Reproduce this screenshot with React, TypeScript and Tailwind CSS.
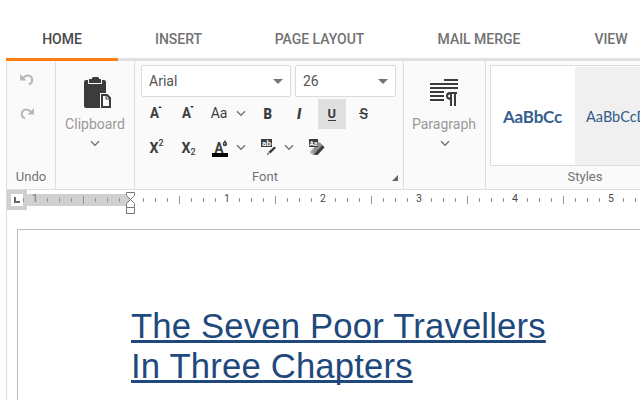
import React from "react";

const tabs = [
  { label: "HOME", width: "w-[112px]" },
  { label: "INSERT", width: "w-[121px]" },
  { label: "PAGE LAYOUT", width: "w-[161px]" },
  { label: "MAIL MERGE", width: "w-[158px]" },
  { label: "VIEW", width: "w-[106px]" },
];

function Chevron() {
  return (
    <svg width="10" height="7" viewBox="0 0 10 7" fill="none" className="shrink-0">
      <path d="M1 1.2 5 5.2 9 1.2" stroke="#757575" strokeWidth="1.4" />
    </svg>
  );
}

function Tool({ children, active = false, label }: { children: React.ReactNode; active?: boolean; label: string }) {
  return (
    <button aria-label={label} className={"flex h-[30px] w-7 shrink-0 items-center justify-center " + (active ? "bg-[#e0e0e0]" : "")}>
      {children}
    </button>
  );
}

function DropTool({ children, label }: { children: React.ReactNode; label: string }) {
  return (
    <div className="flex w-11 shrink-0 items-center">
      <Tool label={label}>{children}</Tool>
      <span className="ml-[2px] flex pb-[2px]">
        <Chevron />
      </span>
    </div>
  );
}

function Glyph({ children }: { children: React.ReactNode }) {
  return (
    <svg width="16" height="16" viewBox="0.5 0.5 16 16" fill="#3c3c3c" className="shrink-0 overflow-visible">
      {children}
    </svg>
  );
}

function Combo({ value, width }: { value: string; width: string }) {
  return (
    <div className={"flex h-8 items-center justify-between rounded-[2px] border border-[#dbdbdb] bg-white pr-[7px] pl-[7px] text-[14px] text-[#525252] " + width}>
      <span>{value}</span>
      <svg width="10" height="5" viewBox="0 0 10 5">
        <path d="M0 0H10L5 5Z" fill="#757575" />
      </svg>
    </div>
  );
}

function Undo({ flip = false }: { flip?: boolean }) {
  return (
    <svg width="14" height="12" viewBox="0 0 14 12" fill="none" className={flip ? "-scale-x-100" : ""}>
      <path d="M3 3.8C7-.2 12.2 1.3 12.2 6c0 2.200-.8 3.700-3.200 4.500" stroke="#b8b8b8" strokeWidth="2" />
      <path d="M0 0V6.500H6.500Z" fill="#b8b8b8" />
    </svg>
  );
}

function ClipboardIcon() {
  return (
    <svg width="28" height="32" viewBox="0 0 28 32" fill="#3c3c3c">
      <path d="M2 3H4V7H18V3H20Q22 3 22 5V16H16V31H2Q0 31 0 29V5Q0 3 2 3Z" />
      <path d="M5 2H8V1Q8 0 10 0H13Q15 0 15 1V2H17V6H5Z" />
      <path d="M18 18H23L26 21V30H18Z" fill="#fafafa" stroke="#3c3c3c" strokeWidth="2" />
      <path d="M22 18V22H26" fill="none" stroke="#3c3c3c" strokeWidth="1" />
    </svg>
  );
}

function ParagraphIcon() {
  return (
    <svg width="28" height="28" viewBox="0 0 28 28" fill="#3c3c3c">
      <path d="M14 0H28V2H14ZM0 4H28V6H0ZM0 8H28V10H0ZM0 12H14V14H0ZM0 16H14V18H0ZM0 20H14V22H0Z" />
      <path d="M20 13H27V15H26V27H24V15H22V27H20V21Q16 20.500 16 17Q16 13 20 13Z" />
      <path d="M20 15.500V18.500Q18 18.500 18 17T20 15.500Z" fill="#fafafa" />
    </svg>
  );
}

function Ruler() {
  const ticks: React.ReactNode[] = [];
  for (let i = -9; i <= 42; i++) {
    if (i === 0) continue;
    const x = 124 + i * 12;
    if (i % 8 === 0) {
      ticks.push(
        <text key={i} x={x} y="12" textAnchor="middle" fontSize="10.5" fill={i < 0 ? "#777777" : "#484848"}>
          {Math.abs(i) / 8}
        </text>
      );
    } else if (i % 4 === 0) {
      ticks.push(<rect key={i} x={x} y="6" width="1" height="8" fill="#929292" />);
    } else {
      ticks.push(<rect key={i} x={x} y="8" width="1" height="4" fill="#929292" />);
    }
  }
  return (
    <svg width="633" height="39" viewBox="0 0 633 39" className="block shrink-0" fontFamily="Roboto, sans-serif">
      <rect x="0" y="4" width="123" height="12" fill="#d0d0d0" />
      <rect x="0" y="0" width="20" height="20" fill="#d0d0d0" />
      <rect x="4" y="4" width="12" height="12" fill="white" />
      <path d="M7 7H9V11H13V13H7Z" fill="#666666" />
      {ticks}
      <path d="M119.500 2.500H127.500V5.500L123.500 9.500L119.500 5.500ZM119.500 17.500V13.500L123.500 9.500L127.500 13.500V17.500ZM119.500 17.500H127.500V23.500H119.500Z" fill="white" stroke="#777777" />
    </svg>
  );
}

export default function App() {
  return (
    <div className="h-[400px] w-[640px] overflow-hidden bg-white pl-1.5 font-['Roboto',sans-serif] text-[#727272]">
      <nav className="flex h-[61px] w-[658px] pt-5">
        {tabs.map((tab, i) => (
          <button
            key={tab.label}
            className={
              "flex h-[41px] shrink-0 justify-center border-b-[3px] pt-[9px] text-[14px] leading-5 font-medium tracking-[-0.02px] " +
              tab.width +
              (i === 0 ? " border-[#ff7c11] text-[#484848]" : " border-[#e0e0e0] text-[#727272]")
            }
          >
            {tab.label}
          </button>
        ))}
      </nav>

      <div className="h-[339px] border-l border-[#dddddd]">
        <section className="flex h-[129px] w-[660px] border-b border-[#dddddd] bg-[#fafafa]">
          <div className="flex w-[49px] shrink-0 flex-col items-center border-r border-[#dddddd]">
            <div className="flex h-[106px] flex-col gap-[22px] pt-[13px] pr-[9px]">
              <Undo />
              <Undo flip />
            </div>
            <span className="text-[13px] leading-5">Undo</span>
          </div>

          <div className="flex w-[79px] shrink-0 flex-col items-center border-r border-[#dddddd] pt-4">
            <div className="pl-[6px]">
              <ClipboardIcon />
            </div>
            <span className="mt-[5px] text-[14px] leading-5 text-[#999999]">Clipboard</span>
            <div className="mt-[6px]">
              <Chevron />
            </div>
          </div>

          <div className="flex w-[269px] shrink-0 flex-col border-r border-[#dddddd] pt-1">
            <div className="flex gap-1 pl-1.5">
              <Combo value="Arial" width="w-[150px]" />
              <Combo value="26" width="w-[101px]" />
            </div>
            <div className="mt-[2px] flex gap-1 pl-[7px]">
              <Tool label="Grow font">
                <Glyph>
                  <text x="2.500" y="12.500" fontSize="14.500" fontWeight="700" textLength="9" lengthAdjust="spacingAndGlyphs">A</text>
                  <path d="M10.500 2.500 12.500 .5 14.500 2.500Z" />
                </Glyph>
              </Tool>
              <Tool label="Shrink font">
                <Glyph>
                  <text x="2.500" y="12.500" fontSize="14.500" fontWeight="700" textLength="9" lengthAdjust="spacingAndGlyphs">A</text>
                  <path d="M10.500 .5 12.500 2.500 14.500 .5Z" />
                </Glyph>
              </Tool>
              <DropTool label="Change case">
                <span className="pr-[2px] pb-[2px] text-[14px] text-[#3c3c3c]">Aa</span>
              </DropTool>
              <Tool label="Bold">
                <Glyph><text x="4" y="13.500" fontSize="14" fontWeight="900" textLength="8.500" lengthAdjust="spacingAndGlyphs">B</text></Glyph>
              </Tool>
              <Tool label="Italic">
                <Glyph><text x="5.500" y="13.500" fontSize="14.500" fontWeight="900" fontStyle="italic">I</text></Glyph>
              </Tool>
              <Tool label="Underline" active>
                <Glyph>
                  <text x="4" y="12.500" fontSize="13.500" fontWeight="700" textLength="8.500" lengthAdjust="spacingAndGlyphs">U</text>
                  <rect x="4.500" y="14.500" width="8" height="1" />
                </Glyph>
              </Tool>
              <Tool label="Strikethrough">
                <Glyph>
                  <text x="4" y="13" fontSize="14" fontWeight="500">S</text>
                  <rect x="3.500" y="7.500" width="9" height="1" />
                </Glyph>
              </Tool>
            </div>
            <div className="mt-1 flex gap-1 pl-[7px]">
              <Tool label="Superscript">
                <Glyph>
                  <text x="2" y="13.500" fontSize="14" fontWeight="700" textLength="9" lengthAdjust="spacingAndGlyphs">X</text>
                  <text x="11" y="6.500" fontSize="9" fontWeight="500">2</text>
                </Glyph>
              </Tool>
              <Tool label="Subscript">
                <Glyph>
                  <text x="2" y="13.500" fontSize="14" fontWeight="700" textLength="9" lengthAdjust="spacingAndGlyphs">X</text>
                  <text x="11" y="15.500" fontSize="9" fontWeight="500">2</text>
                </Glyph>
              </Tool>
              <DropTool label="Font color">
                <Glyph>
                  <text x="3" y="13" fontSize="14.500" fontWeight="700" textLength="9" lengthAdjust="spacingAndGlyphs">A</text>
                  <path d="M13.500 .3C13 2 11.200 3 11.200 4.500a2.200 2.200 0 0 0 4.400 0C15.600 3 14 2 13.500 .3Z" />
                  <path d="M12.300 3.500h1.500v1.500h-1Z" fill="#b5b5b5" />
                  <rect x="0.500" y="13.500" width="16" height="4" fill="#000000" />
                </Glyph>
              </DropTool>
              <DropTool label="Highlight color">
                <Glyph>
                  <rect x="1.500" y="-.5" width="11" height="8" />
                  <text x="2.500" y="6" fontSize="8" fontWeight="700" fill="white" textLength="9" lengthAdjust="spacingAndGlyphs">ab</text>
                  <path d="M14.800 7 16.500 8.500 10.800 14 9 12.300Z" />
                  <path d="M8.500 12.800 10 14.200 7.300 16Z" fill="#555555" />
                </Glyph>
              </DropTool>
              <Tool label="Clear formatting">
                <Glyph>
                  <path d="M2 12.500 7 7 11 10 6 15.500H5Z" fill="#b7b7b7" />
                  <path d="M5 12 10 3 12.500 3 15 5.500 8 15H6Z" fill="#909090" />
                  <path d="M9 12 15 5.500 17 8 10 15.500H6.500Z" />
                  <rect x="1.500" y="-.5" width="9" height="8" />
                  <text x="2" y="6" fontSize="8" fontWeight="700" fill="white" textLength="8" lengthAdjust="spacingAndGlyphs">Aa</text>
                </Glyph>
              </Tool>
            </div>
            <div className="mt-[4px] flex h-5 items-center">
              <span className="w-[260px] pl-2 text-center text-[13px] leading-5">
                <span className="pr-[8px]">Font</span>
              </span>
              <svg width="6" height="6" viewBox="0 0 6 6" className="mt-[2px] ml-[-3px]">
                <path d="M6 0V6H0Z" fill="#666666" />
              </svg>
            </div>
          </div>

          <div className="flex w-[82px] shrink-0 flex-col items-center border-r border-[#dddddd] pt-[18px] pr-px">
            <ParagraphIcon />
            <span className="mt-[7px] text-[14px] leading-5 text-[#999999]">Paragraph</span>
            <div className="mt-[6px] pl-px">
              <Chevron />
            </div>
          </div>

          <div className="w-[174px] shrink-0 pt-1 pl-1">
            <div className="flex h-[101px] border border-r-0 border-[#dddddd] bg-white font-['Lato',sans-serif]">
              <div className="flex w-[84px] shrink-0 items-center pt-[2px] pl-3 text-[17px] font-bold text-[#365f91]">
                <span className="tracking-[-0.2px]">AaBbCc</span>
              </div>
              <div className="mt-px flex w-[85px] shrink-0 items-center bg-[#f0f0f0] pt-px pl-[11px] text-[14.500px] text-[#345a8a]">
                AaBbCcDd
              </div>
            </div>
            <div className="w-[190px] text-center text-[13px] leading-[22px]">Styles</div>
          </div>
        </section>

        <Ruler />

        <main className="ml-[10px] h-[171px] w-[650px] border-t border-l border-[#bcbcbc] bg-white pt-[76px] pl-[113px] font-['Liberation_Sans',Arial,sans-serif] text-[34.667px] leading-10 tracking-[0.18px] text-[#1f497d]">
          <h1 className="whitespace-nowrap underline decoration-[3px] underline-offset-[2px] [text-decoration-skip-ink:none]">
            The Seven Poor Travellers
            <br />
            In Three Chapters
          </h1>
        </main>
      </div>
    </div>
  );
}
